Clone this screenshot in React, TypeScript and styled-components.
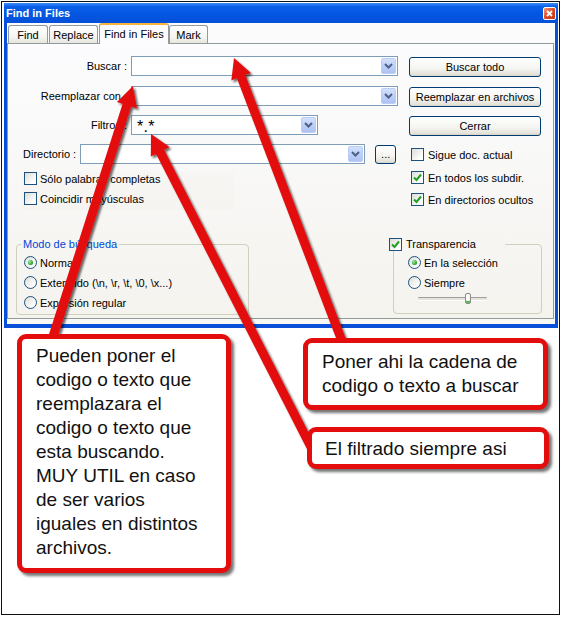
import React from "react";
import styled, { createGlobalStyle } from "styled-components";

const GlobalStyle = createGlobalStyle`
  html, body {
    margin: 0;
    padding: 0;
    background: #fff;
  }
  body {
    width: 563px;
    height: 617px;
    overflow: hidden;
    font-family: "Liberation Sans", Arial, sans-serif;
    color: #000;
  }
`;

const Page = styled.div`
  position: relative;
  width: 563px;
  height: 617px;
`;

const Frame = styled.div`
  box-sizing: border-box;
  width: 559px;
  height: 614px;
  margin: 1px 0 0 1px;
  border: 1px solid #111;
  padding: 1px 1px 0 2px;
  background: #fff;
`;

const Window = styled.div`
  display: flex;
  flex-direction: column;
  width: 554px;
`;

const TitleBar = styled.div`
  display: flex;
  align-items: center;
  justify-content: space-between;
  height: 20px;
  padding: 0 2px 0 2px;
  background: linear-gradient(#3d8cf6 0%, #0a5fe8 18%, #0456e2 55%, #0550d8 100%);
  color: #fff;
  font-size: 11px;
  font-weight: bold;
`;

const CloseBtn = styled.div`
  box-sizing: border-box;
  width: 13px;
  height: 13px;
  border: 1px solid #fff;
  border-radius: 2px;
  background: linear-gradient(135deg, #f09a80, #dc4a22 50%, #c23812);
  display: flex;
  align-items: center;
  justify-content: center;
`;

const Client = styled.div`
  box-sizing: border-box;
  height: 305px;
  border: 3px solid #0a4fd8;
  border-top: 0;
  border-bottom-width: 4px;
  background: #f8f8f5;
  display: flex;
  flex-direction: column;
`;

const TabStrip = styled.div`
  display: flex;
  align-items: flex-end;
  height: 20px;
  padding-left: 1px;
  background: #fbfbfb;
`;

const Tab = styled.div<{ $w: number; $active?: boolean }>`
  box-sizing: border-box;
  width: ${(p) => p.$w}px;
  height: ${(p) => (p.$active ? 21 : 18)}px;
  margin-right: ${(p) => (p.$active ? 0 : 1)}px;
  margin-bottom: ${(p) => (p.$active ? -1 : 0)}px;
  position: ${(p) => (p.$active ? "relative" : "static")};
  z-index: ${(p) => (p.$active ? 1 : "auto")};
  border: 1px solid #919b9c;
  border-bottom: none;
  border-top: ${(p) => (p.$active ? "2px solid #f6b43c" : "1px solid #919b9c")};
  border-radius: 3px 3px 0 0;
  background: ${(p) =>
    p.$active ? "#fcfcfe" : "linear-gradient(#ffffff, #f3f3ef 70%, #e6e5de)"};
  display: flex;
  align-items: center;
  justify-content: center;
  font-size: 11px;
  padding-bottom: ${(p) => (p.$active ? 2 : 0)}px;
`;

const Panel = styled.div`
  box-sizing: border-box;
  width: 547px;
  height: 276px;
  border: 1px solid #919b9c;
  background: linear-gradient(#fcfcfe, #f4f3ee);
  padding-top: 12px;
`;

const TopSection = styled.div`
  display: flex;
  align-items: flex-start;
`;

const LeftCol = styled.div`
  width: 391px;
  display: flex;
  flex-direction: column;
`;

const RightCol = styled.div`
  width: 132px;
  margin-left: 10px;
  display: flex;
  flex-direction: column;
`;

const FieldRow = styled.div<{ $top?: number; $indent?: number }>`
  display: flex;
  align-items: center;
  height: 20px;
  margin-top: ${(p) => p.$top ?? 0}px;
  padding-left: ${(p) => p.$indent ?? 0}px;
`;

const Label = styled.span<{ $w?: number }>`
  width: ${(p) => (p.$w ? `${p.$w}px` : "auto")};
  text-align: right;
  margin-right: 4px;
  font-size: 11px;
  white-space: nowrap;
`;

const Combo = styled.div<{ $w: number }>`
  box-sizing: border-box;
  width: ${(p) => p.$w}px;
  height: 20px;
  border: 1px solid #7f9db9;
  background: #fff;
  display: flex;
  align-items: center;
  justify-content: space-between;
  padding-left: 5px;
`;

const ComboText = styled.span`
  font-size: 16px;
  letter-spacing: 0.3px;
  line-height: 14px;
  padding-top: 3px;
`;

const DropButton = styled.div`
  box-sizing: border-box;
  width: 15px;
  height: 16px;
  margin-right: 1px;
  border: 1px solid #bacdf6;
  border-radius: 2px;
  background: linear-gradient(#d3e0fd, #b9cdf8 60%, #aec3f3);
  display: flex;
  align-items: center;
  justify-content: center;
`;

const Button = styled.div<{ $w: number; $h?: number; $top?: number; $left?: number }>`
  box-sizing: border-box;
  width: ${(p) => p.$w}px;
  height: ${(p) => p.$h ?? 20}px;
  margin-top: ${(p) => p.$top ?? 0}px;
  margin-left: ${(p) => p.$left ?? 0}px;
  border: 1px solid #003c74;
  border-radius: 3px;
  background: linear-gradient(#ffffff, #f4f4f0 60%, #e3e1d8 92%, #d6d0c5);
  display: flex;
  align-items: center;
  justify-content: center;
  font-size: 11px;
  white-space: nowrap;
`;

const CheckArea = styled.div`
  margin-left: 15px;
  width: 211px;
  margin-top: 8px;
  padding: 0 0 5px 1px;
  background: rgba(236, 233, 216, 0.08);
`;

const CheckRow = styled.div<{ $top?: number; $indent?: number; $gap?: number }>`
  display: flex;
  align-items: center;
  height: 13px;
  margin-top: ${(p) => p.$top ?? 0}px;
  padding-left: ${(p) => p.$indent ?? 0}px;
  gap: ${(p) => p.$gap ?? 3}px;
  font-size: 11px;
  white-space: nowrap;
`;

const Box = styled.span`
  box-sizing: border-box;
  width: 13px;
  height: 13px;
  flex: none;
  border: 1px solid #1c5180;
  background: linear-gradient(135deg, #dcdcd7, #ffffff 80%);
  display: flex;
  align-items: center;
  justify-content: center;
`;

const RadioCircle = styled.span`
  box-sizing: border-box;
  width: 13px;
  height: 13px;
  flex: none;
  border: 1px solid #1c5180;
  border-radius: 50%;
  background: linear-gradient(135deg, #dcdcd7, #ffffff 80%);
  display: flex;
  align-items: center;
  justify-content: center;
`;

const RadioDot = styled.span`
  width: 5px;
  height: 5px;
  border-radius: 50%;
  background: radial-gradient(circle at 35% 35%, #9ee89e, #21a121 70%);
`;

const GroupRow = styled.div`
  display: flex;
  align-items: flex-start;
  margin-top: 28px;
`;

const Group = styled.fieldset<{ $left: number; $w: number; $h: number; $pad: number }>`
  box-sizing: border-box;
  margin: 0 0 0 ${(p) => p.$left}px;
  width: ${(p) => p.$w}px;
  height: ${(p) => p.$h}px;
  padding: 0 0 0 ${(p) => p.$pad}px;
  border: 1px solid #d0d0bf;
  border-radius: 4px;
  min-inline-size: 0;
`;

const Legend = styled.legend<{ $shift: number; $w?: number; $blue?: boolean }>`
  padding: 0 2px;
  margin-left: ${(p) => p.$shift}px;
  width: ${(p) => (p.$w ? `${p.$w}px` : "auto")};
  box-sizing: border-box;
  font-size: 11px;
  line-height: 13px;
  color: ${(p) => (p.$blue ? "#0046d5" : "#000")};
`;

const LegendInner = styled.span`
  display: flex;
  align-items: center;
  gap: 4px;
`;

const RadioList = styled.div<{ $top: number }>`
  display: flex;
  flex-direction: column;
  gap: 7px;
  margin-top: ${(p) => p.$top}px;
`;

const Slider = styled.div`
  position: relative;
  display: flex;
  align-items: center;
  width: 69px;
  height: 12px;
  margin: 3px 0 0 10px;
  &::before {
    content: "";
    position: absolute;
    left: 0;
    right: 0;
    top: 5px;
    height: 2px;
    border-top: 1px solid #a09f99;
    border-bottom: 1px solid #fff;
    background: #e4e3dc;
    border-radius: 1px;
  }
`;

const Thumb = styled.span`
  position: relative;
  box-sizing: border-box;
  width: 6px;
  height: 11px;
  margin-left: 47px;
  border: 1px solid #8c8c86;
  border-radius: 2px;
  background: linear-gradient(90deg, #ffffff, #f2f2ee);
  box-shadow: inset 0 -2px 0 #4dbb4d;
`;

const Annotations = styled.div`
  display: flex;
  align-items: flex-start;
  margin-top: 6px;
`;

const CalloutColumn = styled.div`
  display: flex;
  flex-direction: column;
  margin-left: 72px;
`;

const Callout = styled.div<{ $w: number; $h: number; $top?: number; $left?: number; $pt: number; $pl: number }>`
  position: relative;
  z-index: 2;
  box-sizing: border-box;
  width: ${(p) => p.$w}px;
  height: ${(p) => p.$h}px;
  margin-top: ${(p) => p.$top ?? 0}px;
  margin-left: ${(p) => p.$left ?? 0}px;
  padding: ${(p) => p.$pt}px 0 0 ${(p) => p.$pl}px;
  border: 5px solid #e30d0d;
  border-radius: 9px;
  background: #fff;
  box-shadow: 3px 3px 3px rgba(0, 0, 0, 0.55);
  font-size: 19px;
  line-height: 24px;
  color: #111;
  white-space: pre-line;
`;

const Arrows = styled.svg`
  position: absolute;
  left: 0;
  top: 0;
  z-index: 1;
  pointer-events: none;
`;

type Pt = [number, number];

const arrowPoints = (tail: Pt, tip: Pt, shaft = 4.5, head = 10.5, headLen = 20) => {
  const dx = tip[0] - tail[0];
  const dy = tip[1] - tail[1];
  const len = Math.hypot(dx, dy);
  const ux = dx / len;
  const uy = dy / len;
  const px = -uy;
  const py = ux;
  const bx = tip[0] - ux * headLen;
  const by = tip[1] - uy * headLen;
  const pts: Pt[] = [
    [tail[0] + px * shaft, tail[1] + py * shaft],
    [bx + px * shaft, by + py * shaft],
    [bx + px * head, by + py * head],
    tip,
    [bx - px * head, by - py * head],
    [bx - px * shaft, by - py * shaft],
    [tail[0] - px * shaft, tail[1] - py * shaft],
  ];
  return pts.map((p) => `${p[0].toFixed(1)},${p[1].toFixed(1)}`).join(" ");
};

const arrows: { tail: Pt; tip: Pt }[] = [
  { tail: [345, 348], tip: [234, 57] },
  { tail: [50, 345], tip: [133, 85] },
  { tail: [312, 448], tip: [151, 133] },
];

const Chevron = () => (
  <svg width="9" height="6" viewBox="0 0 9 6">
    <polyline points="1,1 4.5,4.5 8,1" fill="none" stroke="#4d6185" strokeWidth="2" />
  </svg>
);

const Check = () => (
  <svg width="9" height="9" viewBox="0 0 9 9">
    <polyline points="1,4.5 3.5,7 8,1.5" fill="none" stroke="#21a121" strokeWidth="2" />
  </svg>
);

const CheckBox = ({ checked }: { checked?: boolean }) => <Box>{checked && <Check />}</Box>;

const Radio = ({ checked }: { checked?: boolean }) => (
  <RadioCircle>{checked && <RadioDot />}</RadioCircle>
);

const ComboBox = ({ w, text }: { w: number; text?: string }) => (
  <Combo $w={w}>
    <ComboText>{text}</ComboText>
    <DropButton>
      <Chevron />
    </DropButton>
  </Combo>
);

export default function App() {
  return (
    <Page>
      <GlobalStyle />
      <Frame>
        <Window>
          <TitleBar>
            <span>Find in Files</span>
            <CloseBtn>
              <svg width="7" height="7" viewBox="0 0 7 7">
                <path d="M1 1 L6 6 M6 1 L1 6" stroke="#fff" strokeWidth="1.8" />
              </svg>
            </CloseBtn>
          </TitleBar>
          <Client>
            <TabStrip>
              <Tab $w={40}>Find</Tab>
              <Tab $w={49}>Replace</Tab>
              <Tab $w={70} $active>
                Find in Files
              </Tab>
              <Tab $w={39}>Mark</Tab>
            </TabStrip>
            <Panel>
              <TopSection>
                <LeftCol>
                  <FieldRow>
                    <Label $w={119}>Buscar :</Label>
                    <ComboBox w={267} />
                  </FieldRow>
                  <FieldRow $top={10}>
                    <Label $w={119}>Reemplazar con :</Label>
                    <ComboBox w={267} />
                  </FieldRow>
                  <FieldRow $top={9}>
                    <Label $w={119}>Filtros :</Label>
                    <ComboBox w={187} text="*.*" />
                  </FieldRow>
                  <FieldRow $top={9} $indent={15}>
                    <Label>Directorio :</Label>
                    <ComboBox w={285} />
                    <Button $w={21} $h={19} $left={10}>
                      ...
                    </Button>
                  </FieldRow>
                  <CheckArea>
                    <CheckRow>
                      <CheckBox />
                      Sólo palabras completas
                    </CheckRow>
                    <CheckRow $top={7}>
                      <CheckBox />
                      Coincidir mayúsculas
                    </CheckRow>
                  </CheckArea>
                </LeftCol>
                <RightCol>
                  <Button $w={132} $top={1}>
                    Buscar todo
                  </Button>
                  <Button $w={132} $top={10}>
                    Reemplazar en archivos
                  </Button>
                  <Button $w={132} $top={9}>
                    Cerrar
                  </Button>
                  <CheckRow $top={12} $indent={2} $gap={4}>
                    <CheckBox />
                    Sigue doc. actual
                  </CheckRow>
                  <CheckRow $top={10} $indent={2} $gap={4}>
                    <CheckBox checked />
                    En todos los subdir.
                  </CheckRow>
                  <CheckRow $top={9} $indent={2} $gap={4}>
                    <CheckBox checked />
                    En directorios ocultos
                  </CheckRow>
                </RightCol>
              </TopSection>
              <GroupRow>
                <Group $left={8} $w={233} $h={77} $pad={7}>
                  <Legend $shift={-3} $blue>
                    Modo de búsqueda
                  </Legend>
                  <RadioList $top={5}>
                    <CheckRow>
                      <Radio checked />
                      Normal
                    </CheckRow>
                    <CheckRow>
                      <Radio />
                      Extendido (\n, \r, \t, \0, \x...)
                    </CheckRow>
                    <CheckRow>
                      <Radio />
                      Expresión regular
                    </CheckRow>
                  </RadioList>
                </Group>
                <Group $left={144} $w={149} $h={76} $pad={14}>
                  <Legend $shift={-21} $w={118}>
                    <LegendInner>
                      <CheckBox checked />
                      Transparencia
                    </LegendInner>
                  </Legend>
                  <RadioList $top={5}>
                    <CheckRow>
                      <Radio checked />
                      En la selección
                    </CheckRow>
                    <CheckRow>
                      <Radio />
                      Siempre
                    </CheckRow>
                  </RadioList>
                  <Slider>
                    <Thumb />
                  </Slider>
                </Group>
              </GroupRow>
            </Panel>
          </Client>
        </Window>
        <Annotations>
          <Callout $w={214} $h={239} $left={13} $pt={5} $pl={14}>
            {"Pueden poner el\ncodigo o texto que\nreemplazara el\ncodigo o texto que\nesta buscando.\nMUY UTIL en caso\nde ser varios\niguales en distintos\narchivos."}
          </Callout>
          <CalloutColumn>
            <Callout $w={245} $h={72} $top={4} $pt={7} $pl={14}>
              {"Poner ahi la cadena de\ncodigo o texto a buscar"}
            </Callout>
            <Callout $w={242} $h={42} $top={17} $left={4} $pt={5} $pl={13}>
              El filtrado siempre asi
            </Callout>
          </CalloutColumn>
        </Annotations>
      </Frame>
      <Arrows width="563" height="617" viewBox="0 0 563 617">
        <defs>
          <filter id="arrowShadow" x="-30%" y="-10%" width="160%" height="120%">
            <feDropShadow dx="2" dy="2" stdDeviation="1.3" floodColor="#000" floodOpacity="0.6" />
          </filter>
        </defs>
        {arrows.map((a, i) => (
          <polygon key={i} points={arrowPoints(a.tail, a.tip)} fill="#e30d0d" filter="url(#arrowShadow)" />
        ))}
      </Arrows>
    </Page>
  );
}
